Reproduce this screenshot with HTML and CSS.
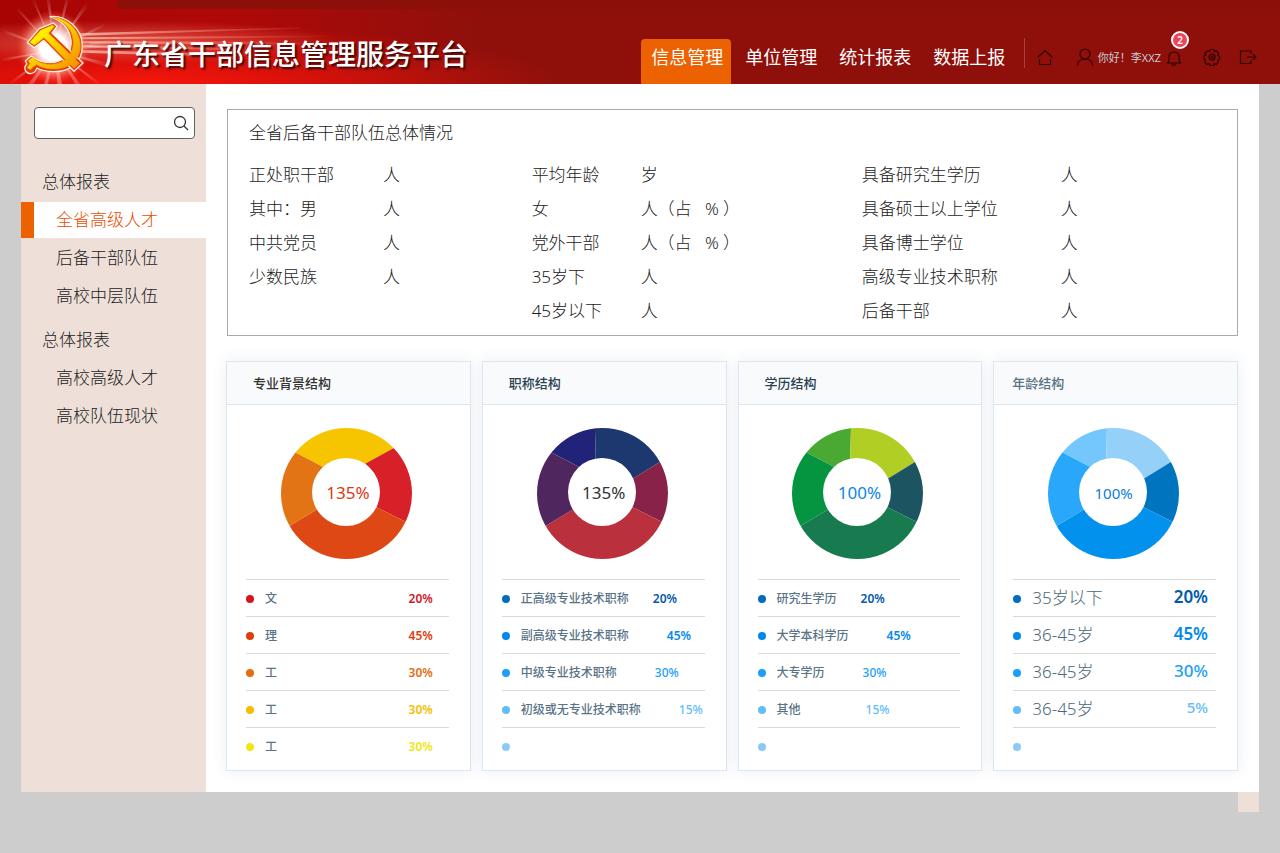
FILE: index.html
```html
<!DOCTYPE html>
<html lang="zh-CN">
<head>
    <meta charset="UTF-8">
    <meta name="viewport" content="width=device-width, initial-scale=1.0">
    <title>广东省干部信息管理服务平台</title>
    <link rel="stylesheet" href="styles.css">
</head>
<body>
    <header class="header">
        <svg class="emblem" viewBox="0 0 312 252" aria-hidden="true">
            <defs>
                <radialGradient id="ray" gradientUnits="userSpaceOnUse" cx="165" cy="150" r="170">
                    <stop offset="0.2" stop-color="#fff" stop-opacity="0.6"/>
                    <stop offset="1" stop-color="#fff" stop-opacity="0"/>
                </radialGradient>
                <radialGradient id="glow">
                    <stop offset="0.35" stop-color="#fff"/>
                    <stop offset="0.7" stop-color="#ffb0a0" stop-opacity="0.6"/>
                    <stop offset="1" stop-color="#ff4020" stop-opacity="0"/>
                </radialGradient>
                <linearGradient id="streak">
                    <stop offset="0" stop-color="#ffd8c8" stop-opacity="0.75"/>
                    <stop offset="1" stop-color="#ff8060" stop-opacity="0"/>
                </linearGradient>
                <linearGradient id="gold" x1="0" y1="0" x2="1" y2="1">
                    <stop offset="0.2" stop-color="#fff200"/>
                    <stop offset="1" stop-color="#f58a00"/>
                </linearGradient>
            </defs>
            <!-- 光芒 -->
            <path fill="url(#streak)" d="M230 100L900 82 900 86 230 108ZM240 112L1000 106 1000 112 240 118ZM245 124L900 126 900 134 245 130ZM250 136L700 144 700 150 250 142ZM240 150L600 160 600 168 240 158Z"/>
            <path fill="url(#ray)" d="M165 150L0 84 0 96ZM165 150L20 0 34 0ZM165 150L96 0 104 0ZM165 150L140 0 150 0ZM165 150L196 0 206 0ZM165 150L262 0 278 0ZM165 150L330 60 330 72ZM165 150L340 118 340 142ZM165 150L330 190 330 204ZM165 150L290 252 306 252ZM165 150L226 252 240 252ZM165 150L172 252 186 252ZM165 150L132 252 144 252ZM165 150L84 252 100 252ZM165 150L20 252 36 252ZM165 150L0 176 0 186Z"/>
            <circle cx="160" cy="142" r="112" fill="url(#glow)"/>
            <!-- 镰刀锤子 -->
            <g stroke-linejoin="round">
                <g fill="#e23a08" stroke="#fff3e0" stroke-width="4">
                    <path d="M150 50C196 44 247 84 247 138C247 190 206 217 158 215C138 214 122 210 111 204L106 213C99 224 84 223 77 213C72 204 75 197 81 192L76 183L94 168C112 184 146 194 176 183C206 172 219 142 211 110C204 80 180 60 150 50Z"/>
                    <path d="M82 128L118 86L160 69L171 79L156 99L249 189L222 214L131 121L103 143Z"/>
                </g>
                <g fill="url(#gold)" stroke="#f4930c" stroke-width="2">
                    <path d="M158 52C200 54 241 90 241 138C241 182 204 209 158 207C138 206 122 202 110 194L98 202C94 212 84 208 82 201L90 191L84 183L97 172C116 190 150 200 182 187C212 174 226 142 217 108C209 80 186 62 158 52Z"/>
                    <path d="M89 127L122 90L158 75L163 80L146 100L238 190L222 205L132 113L104 136Z"/>
                </g>
            </g>
        </svg>
        <h1 class="site-title">广东省干部信息管理服务平台</h1>

        <nav class="main-nav">
            <a href="#" class="active">信息管理</a>
            <a href="#">单位管理</a>
            <a href="#">统计报表</a>
            <a href="#">数据上报</a>
        </nav>

        <div class="user-bar">
            <button type="button" class="icon-btn home" aria-label="首页">
                <svg viewBox="0 0 18 18"><path d="M1.500 9.500L9 2.500l7.500 7M3.500 11v5.500h11v-5.500"/></svg>
            </button>
            <a href="#" class="user">
                <svg viewBox="0 0 18 18"><circle cx="9" cy="6" r="5"/><path d="M1.500 17.500c0-4 3-6.500 7.500-6.500s7.500 2.500 7.500 6.500"/></svg>
                <span>你好！李XXZ</span>
            </a>
            <button type="button" class="icon-btn bell" aria-label="消息">
                <svg viewBox="0 0 18 18"><path d="M1.500 15h15M2.500 15c1.500-1.500 1.500-3 1.500-6 0-3 2-5 5-5s5 2 5 5c0 3 0 4.500 1.500 6M7 15.500c0 2.300 4 2.300 4 0"/></svg>
                <span class="badge">2</span>
            </button>
            <button type="button" class="icon-btn gear" aria-label="设置">
                <svg viewBox="0 0 18 18"><path d="M7.300 1.500h3.400l.7 2 2.100-.6 2.100 2.400-1 1.900 2 1v3l-2 1 .8 2-2.200 2.200-2-.8-1 1.900H6.800l-.8-1.900-2.200.7-2.100-2.200.9-2-1.600-1V8l1.700-.9-.8-2L4.200 3l2.200.6z"/><circle cx="9" cy="9.200" r="3"/><circle cx="9" cy="9.200" r="1"/></svg>
            </button>
            <button type="button" class="icon-btn logout" aria-label="退出">
                <svg viewBox="0 0 18 18"><path d="M12 6V3H1.500v12.500H12v-3M8 9.200h9M14 6.200l3 3-3 3"/></svg>
            </button>
        </div>
    </header>

    <div class="page">
        <aside class="sidebar">
            <form class="search">
                <input type="text" aria-label="搜索">
                <button type="submit" aria-label="查询">
                    <svg viewBox="0 0 16 16"><circle cx="7" cy="7" r="5.500"/><path d="M11 11l4 4"/></svg>
                </button>
            </form>
            <div class="menu-group">
                <h2>总体报表</h2>
                <a href="#" class="active">全省高级人才</a>
                <a href="#">后备干部队伍</a>
                <a href="#">高校中层队伍</a>
            </div>
            <div class="menu-group">
                <h2>总体报表</h2>
                <a href="#">高校高级人才</a>
                <a href="#">高校队伍现状</a>
            </div>
        </aside>

        <main class="content">
            <section class="overview">
                <h2>全省后备干部队伍总体情况</h2>
                <div class="overview-cols">
                    <dl class="col-a">
                        <dt>正处职干部</dt><dd>人</dd>
                        <dt>其中：男</dt><dd>人</dd>
                        <dt>中共党员</dt><dd>人</dd>
                        <dt>少数民族</dt><dd>人</dd>
                    </dl>
                    <dl class="col-b">
                        <dt>平均年龄</dt><dd>岁</dd>
                        <dt>女</dt><dd>人（占&nbsp;&nbsp;&nbsp;%&nbsp;）</dd>
                        <dt>党外干部</dt><dd>人（占&nbsp;&nbsp;&nbsp;%&nbsp;）</dd>
                        <dt>35岁下</dt><dd>人</dd>
                        <dt>45岁以下</dt><dd>人</dd>
                    </dl>
                    <dl class="col-c">
                        <dt>具备研究生学历</dt><dd>人</dd>
                        <dt>具备硕士以上学位</dt><dd>人</dd>
                        <dt>具备博士学位</dt><dd>人</dd>
                        <dt>高级专业技术职称</dt><dd>人</dd>
                        <dt>后备干部</dt><dd>人</dd>
                    </dl>
                </div>
            </section>

            <div class="cards">
                <section class="card card-major">
                    <h3>专业背景结构</h3>
                    <div class="chart">
                        <svg viewBox="0 0 131 131">
                            <path fill="#f7c500" d="M0 17V0H131V10L80 38L48 42Z"/>
                            <path fill="#d72027" d="M131 10V97L93 78L65 65L80 38Z"/>
                            <path fill="#dd4814" d="M131 97V131H0V103L40 79L65 65L93 78Z"/>
                            <path fill="#e37416" d="M0 103V17L48 42L65 65L40 79Z"/>
                            <circle cx="65" cy="64" r="34" fill="#fff"/>
                        </svg>
                        <strong>135%</strong>
                    </div>
                    <ul class="legend">
                        <li class="red"><i></i><span>文</span><b>20%</b></li>
                        <li class="vermilion"><i></i><span>理</span><b>45%</b></li>
                        <li class="orange"><i></i><span>工</span><b>30%</b></li>
                        <li class="amber"><i></i><span>工</span><b>30%</b></li>
                        <li class="yellow"><i></i><span>工</span><b>30%</b></li>
                    </ul>
                </section>

                <section class="card card-title">
                    <h3>职称结构</h3>
                    <div class="chart">
                        <svg viewBox="0 0 131 131">
                            <path fill="#202377" d="M0 17V0H59L58 38L65 65L48 42Z"/>
                            <path fill="#1d386f" d="M59 0H131V29L92 53L65 65L58 38Z"/>
                            <path fill="#882248" d="M131 29V97L93 78L65 65L92 53Z"/>
                            <path fill="#ba303c" d="M131 97V131H0V103L40 79L65 65L93 78Z"/>
                            <path fill="#50265f" d="M0 103V17L48 42L65 65L40 79Z"/>
                            <circle cx="65" cy="64" r="34" fill="#fff"/>
                        </svg>
                        <strong>135%</strong>
                    </div>
                    <ul class="legend">
                        <li class="blue-1"><i></i><span>正高级专业技术职称</span><b>20%</b></li>
                        <li class="blue-2 wide"><i></i><span>副高级专业技术职称</span><b>45%</b></li>
                        <li class="blue-3 wide"><i></i><span>中级专业技术职称</span><b>30%</b></li>
                        <li class="blue-4 wide"><i></i><span>初级或无专业技术职称</span><b>15%</b></li>
                        <li class="blue-5"><i></i></li>
                    </ul>
                </section>

                <section class="card card-degree">
                    <h3>学历结构</h3>
                    <div class="chart">
                        <svg viewBox="0 0 131 131">
                            <path fill="#49a933" d="M0 17V0H59L58 38L65 65L48 42Z"/>
                            <path fill="#b0ce23" d="M59 0H131V29L92 53L65 65L58 38Z"/>
                            <path fill="#1d5462" d="M131 29V97L93 78L65 65L92 53Z"/>
                            <path fill="#177b4f" d="M131 97V131H0V103L40 79L65 65L93 78Z"/>
                            <path fill="#059541" d="M0 103V17L48 42L65 65L40 79Z"/>
                            <circle cx="65" cy="64" r="34" fill="#fff"/>
                        </svg>
                        <strong>100%</strong>
                    </div>
                    <ul class="legend">
                        <li class="blue-1"><i></i><span>研究生学历</span><b>20%</b></li>
                        <li class="blue-2 wide"><i></i><span>大学本科学历</span><b>45%</b></li>
                        <li class="blue-3 wide"><i></i><span>大专学历</span><b>30%</b></li>
                        <li class="blue-4 wider"><i></i><span>其他</span><b>15%</b></li>
                        <li class="blue-5"><i></i></li>
                    </ul>
                </section>

                <section class="card card-age">
                    <h3>年龄结构</h3>
                    <div class="chart">
                        <svg viewBox="0 0 131 131">
                            <path fill="#74c7fd" d="M0 17V0H59L58 38L65 65L48 42Z"/>
                            <path fill="#94d0f8" d="M59 0H131V29L92 53L65 65L58 38Z"/>
                            <path fill="#0074bf" d="M131 29V97L93 78L65 65L92 53Z"/>
                            <path fill="#0391ee" d="M131 97V131H0V103L40 79L65 65L93 78Z"/>
                            <path fill="#29a7fb" d="M0 103V17L48 42L65 65L40 79Z"/>
                            <circle cx="65" cy="64" r="34" fill="#fff"/>
                        </svg>
                        <strong>100%</strong>
                    </div>
                    <ul class="legend">
                        <li class="blue-1"><i></i><span>35岁以下</span><b>20%</b></li>
                        <li class="blue-2"><i></i><span>36-45岁</span><b>45%</b></li>
                        <li class="blue-3"><i></i><span>36-45岁</span><b>30%</b></li>
                        <li class="blue-4"><i></i><span>36-45岁</span><b>5%</b></li>
                        <li class="blue-5"><i></i></li>
                    </ul>
                </section>
            </div>
        </main>
    </div>
    <div class="page-corner"></div>
</body>
</html>
```

FILE: styles.css
```css
* { box-sizing: border-box; }
body {
    margin: 0;
    background: #cdcdcd;
    color: #222;
    font-family: "Noto Sans", "Noto Sans CJK SC", sans-serif;
    font-size: 17px;
    font-weight: 300;
}
h1, h2, h3, ul, dl, dd { margin: 0; padding: 0; font-weight: inherit; }
ul { list-style: none; }
a { color: inherit; text-decoration: none; }
button { border: none; background: none; padding: 0; font-family: inherit; cursor: pointer; }
svg { display: block; }

/* 顶部 */
.header {
    display: flex;
    height: 84px;
    background:
        linear-gradient(#8c0f0a, #8c0f0a) 117px 0 / 100% 9px no-repeat,
        radial-gradient(ellipse 220px 22px at 120px 42px, rgba(255,150,130,0.5), rgba(255,90,60,0) 100%),
        radial-gradient(ellipse 420px 60px at 140px 84px, rgba(255,24,12,0.9), rgba(230,20,10,0) 100%),
        linear-gradient(90deg, #a80404 0, #b00808 220px, #8f100b 480px);
}
.emblem { width: 104px; height: 84px; overflow: visible; }
.site-title {
    position: relative;
    flex: 1;
    color: #fff;
    font-size: 28px;
    font-weight: 500;
    line-height: 40px;
    padding-top: 34px;
    white-space: nowrap;
    text-shadow: 2px 2px 2px #3a0806;
}
.main-nav { display: flex; gap: 4px; padding-top: 39px; }
.main-nav a {
    width: 90px;
    padding-left: 3px;
    line-height: 37px;
    text-align: center;
    color: #fff;
    font-size: 18px;
    font-weight: 400;
    border-radius: 4px 4px 0 0;
}
.main-nav a.active { background: #ec6100; }
.user-bar {
    display: flex;
    align-items: center;
    align-self: flex-start;
    height: 30px;
    margin: 38px 23px 0 11px;
    padding: 8px 0 0 11px;
    border-left: 1px solid #a8413c;
}
.user-bar svg {
    width: 18px;
    height: 18px;
    fill: none;
    stroke: #2e0503;
    stroke-width: 1.2;
}
.user { display: flex; align-items: center; gap: 4px; margin: 0 4px 0 22px; }
.user span { color: #c3cdd0; font-size: 11px; font-weight: 400; white-space: nowrap; }
.bell { position: relative; }
.badge {
    position: absolute;
    top: -17px;
    right: -6px;
    width: 18px;
    height: 18px;
    border: 2px solid #fff;
    border-radius: 50%;
    background: #ee4458;
    color: #fff;
    font-size: 10px;
    font-weight: 600;
    line-height: 14px;
}
.gear { margin-left: 20px; }
.logout { margin-left: 18px; }

/* 主体 */
.page { display: flex; margin: 0 21px; background: #fff; }
.sidebar { flex: none; width: 185px; padding-top: 23px; background: #eee0d8; }
.search {
    display: flex;
    align-items: center;
    height: 32px;
    margin: 0 11px 25px 13px;
    padding-right: 5px;
    border: 1px solid #606060;
    border-radius: 4px;
    background: #fff;
}
.search input {
    flex: 1;
    min-width: 0;
    padding: 0 8px;
    border: none;
    outline: none;
    background: none;
    font-size: 14px;
}
.search svg { width: 16px; height: 16px; fill: none; stroke: #333; stroke-width: 1.3; }
.menu-group { display: flex; flex-direction: column; gap: 2px; margin-bottom: 8px; line-height: 36px; }
.menu-group h2 { padding-left: 21px; font-size: 17px; }
.menu-group a { padding-left: 22px; border-left: 13px solid transparent; }
.menu-group a.active { background: #fff; border-color: #ec6100; color: #e84d00; }

.content { flex: 1; min-width: 0; padding: 25px 21px 21px 20px; }
.overview { margin-left: 1px; padding: 6px 0 7px 21px; border: 1px solid #aaa; line-height: 34px; }
.overview h2 { margin-bottom: 8px; font-size: 17px; }
.overview-cols { display: grid; grid-template-columns: 28% 33% 1fr; align-items: start; }
.overview dl { display: grid; }
.col-a { grid-template-columns: 134px 1fr; }
.col-b { grid-template-columns: 109px 1fr; padding-left: 6px; }
.col-c { grid-template-columns: 199px 1fr; padding-left: 10px; }

/* 统计卡片 */
.cards { display: grid; grid-template-columns: repeat(4, 1fr); gap: 11px; margin-top: 25px; }
.card {
    padding-bottom: 6px;
    border: 1px solid #dde7f0;
    background: #fff;
    box-shadow: 0 0 14px rgba(70,100,160,0.1);
}
.card h3 {
    padding: 0 26px;
    background: #f8fafc;
    border-bottom: 1px solid #dde7f0;
    color: #2c4250;
    font-size: 13px;
    font-weight: 500;
    line-height: 42px;
}
.chart { display: grid; place-items: center; margin: 23px 4px 20px 0; }
.chart svg, .chart strong { grid-area: 1 / 1; }
.chart svg { width: 131px; height: 131px; border-radius: 50%; }
.chart strong { padding: 0 0 2px 3px; font-size: 17px; font-weight: 400; }
.legend { padding: 0 21px 0 19px; }
.legend li { display: flex; align-items: center; height: 37px; border-top: 1px solid #d8dadc; }
.legend i { width: 8px; height: 8px; margin: 2px 11px 0 0; border-radius: 50%; background: currentColor; }
.legend span { color: #5a7486; font-size: 12px; font-weight: 500; white-space: nowrap; }
.legend b { margin-left: 24px; font-size: 12px; font-weight: 600; }
.legend .wide b { margin-left: 38px; }
.legend .wider b { margin-left: 65px; }

.card-major h3 { color: #333; }
.card-major strong { color: #db3a12; }
.card-major .legend b { margin: 0 16px 0 auto; }
.card-title strong { color: #333; }
.card-degree strong { color: #0a86e8; }
.card-age h3 { padding: 0 18px; color: #5a7486; }
.card-age .chart strong { padding-left: 0; color: #0a7cd8; font-size: 15px; }
.card-age .legend span { padding-bottom: 4px; color: #4c687a; font-size: 17px; font-weight: 300; }
.card-age .legend b { margin: 0 8px 0 auto; padding-bottom: 4px; font-size: 17px; }
.card-age .legend .blue-4 b { font-size: 15px; }

.red { color: #d7141d; }
.vermilion { color: #de3d0c; }
.orange { color: #e56d0f; }
.amber { color: #f4bd00; }
.yellow { color: #f0e614; }
.blue-1 { color: #006dbd; }
.blue-2 { color: #0388ec; }
.blue-3 { color: #1c9ff8; }
.blue-4 { color: #62bdfa; }
.blue-5 { color: #8bcaf6; }
.blue-1 b { color: #0059ad; }
.legend .blue-3 b { font-weight: 500; }
.legend .blue-4 b { font-weight: 500; }

.page-corner { width: 21px; height: 20px; margin: 0 21px 0 auto; background: #eee0d8; }
```
